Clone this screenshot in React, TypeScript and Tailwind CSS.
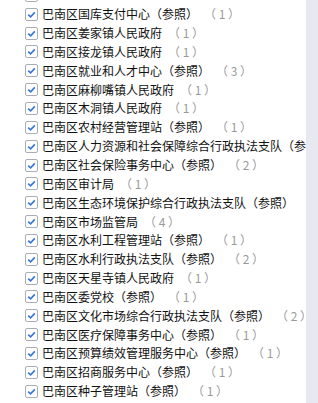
import React from 'react'

// Units in the tree, with how many people each has
const units: { name: string; ref?: boolean; count?: number }[] = [
  { name: '巴南区国库支付中心', ref: true, count: 1 },
  { name: '巴南区姜家镇人民政府', count: 1 },
  { name: '巴南区接龙镇人民政府', count: 1 },
  { name: '巴南区就业和人才中心', ref: true, count: 3 },
  { name: '巴南区麻柳嘴镇人民政府', count: 1 },
  { name: '巴南区木洞镇人民政府', count: 1 },
  { name: '巴南区农村经营管理站', ref: true, count: 1 },
  { name: '巴南区人力资源和社会保障综合行政执法支队', ref: true, count: 1 },
  { name: '巴南区社会保险事务中心', ref: true, count: 2 },
  { name: '巴南区审计局', count: 1 },
  { name: '巴南区生态环境保护综合行政执法支队', ref: true, count: 1 },
  { name: '巴南区市场监管局', count: 4 },
  { name: '巴南区水利工程管理站', ref: true, count: 1 },
  { name: '巴南区水利行政执法支队', ref: true, count: 2 },
  { name: '巴南区天星寺镇人民政府', count: 1 },
  { name: '巴南区委党校', ref: true, count: 1 },
  { name: '巴南区文化市场综合行政执法支队', ref: true, count: 2 },
  { name: '巴南区医疗保障事务中心', ref: true, count: 1 },
  { name: '巴南区预算绩效管理服务中心', ref: true, count: 1 },
  { name: '巴南区招商服务中心', ref: true, count: 1 },
  { name: '巴南区种子管理站', ref: true, count: 1 },
]

function CheckBox() {
  return (
    <svg width="13" height="13" viewBox="0 0 13 13" className="shrink-0">
      <rect x="0.5" y="0.5" width="12" height="12" rx="1.5" fill="#fff" stroke="#a9adb5" />
      <path d="M3.2 6.6 L5.6 8.8 L9.8 4.4" fill="none" stroke="#3a78d4" strokeWidth="1.7" />
    </svg>
  )
}

export default function App() {
  return (
    <div
      className="flex w-[318px] h-[403px] bg-white overflow-hidden"
      style={{ fontFamily: '"Noto Sans CJK SC", "Microsoft YaHei", sans-serif' }}
    >
      <div className="flex-1 min-w-0 overflow-hidden">
        <div className="mt-[-14px]">
          {/* row scrolled above the top: only its checkbox edge shows */}
          <div className="flex items-center h-[18.85px] pl-[25px]">
            <CheckBox />
          </div>
          {units.map((u) => (
            <div key={u.name} className="flex items-center h-[18.85px] pl-[25px] gap-[4px] whitespace-nowrap">
              <CheckBox />
              <span className="text-[12px] leading-none text-[#111]">
                {u.name}
                {u.ref && '（参照）'}
              </span>
              <span className="ml-[2px] text-[12px] leading-none text-[#9a9a9a]">（ {u.count} ）</span>
            </div>
          ))}
        </div>
      </div>
      <div className="w-[12px] shrink-0 bg-[#e8e9f0]" />
    </div>
  )
}
